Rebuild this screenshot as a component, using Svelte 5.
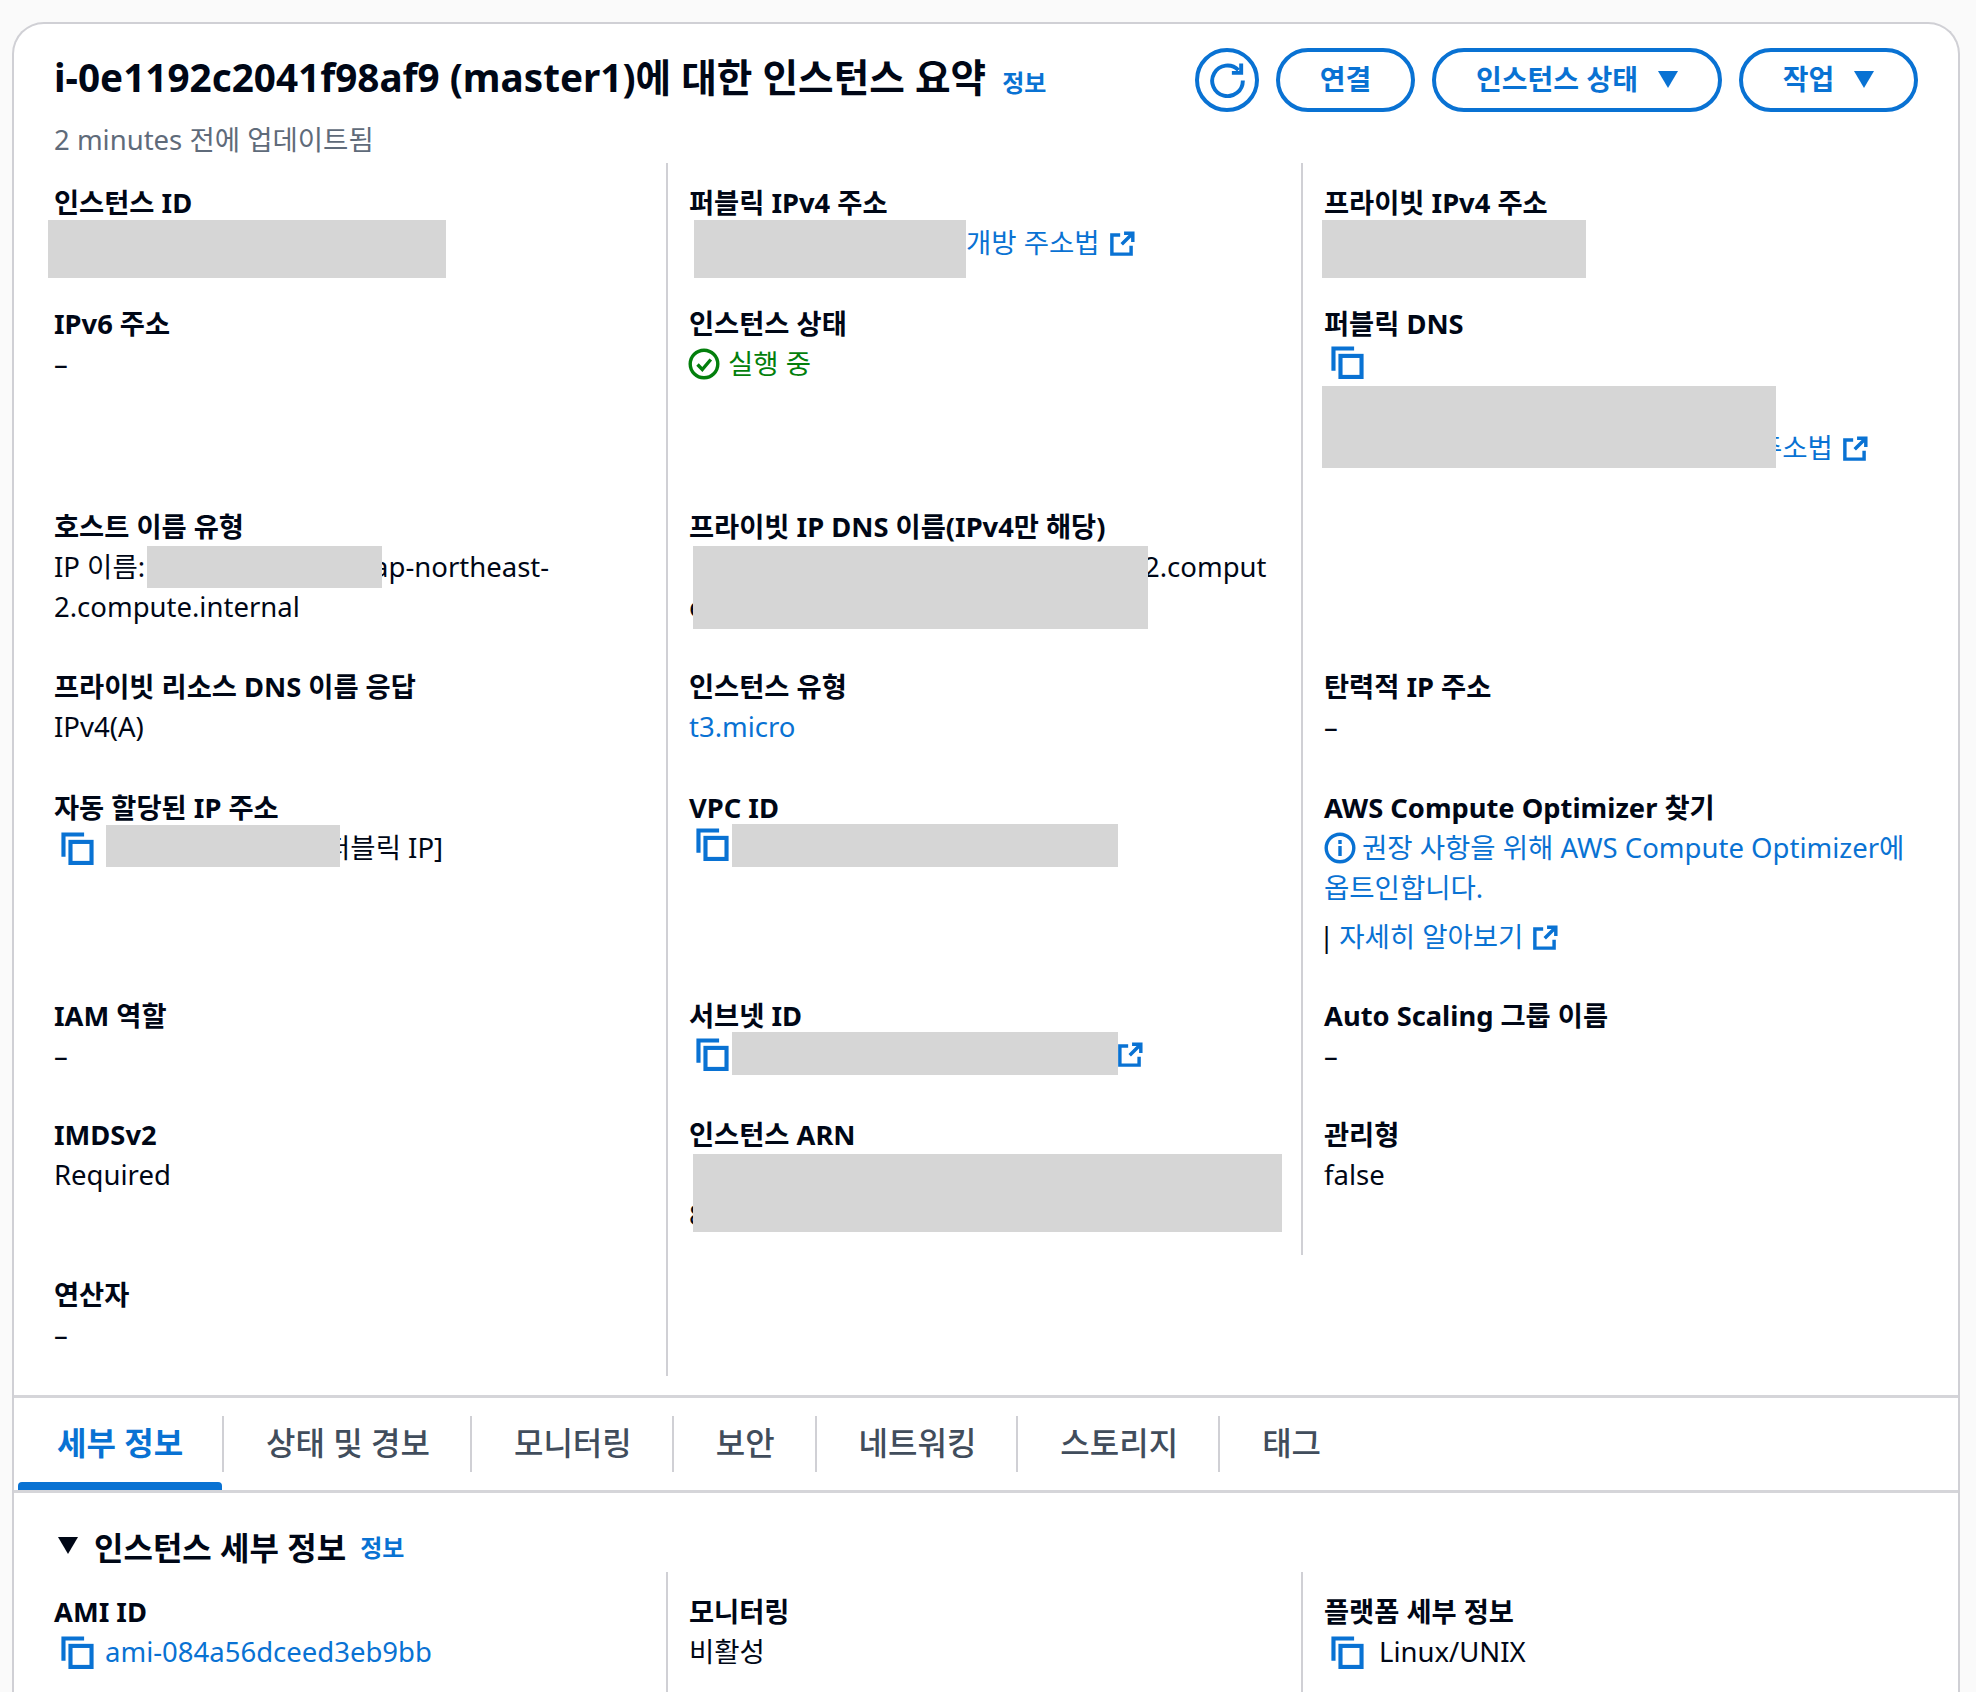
<script>
	const tabs = ['세부 정보', '상태 및 경보', '모니터링', '보안', '네트워킹', '스토리지', '태그'];
</script>

{#snippet copy()}
	<svg class="copy" viewBox="0 0 16 16" fill="none" stroke="currentColor" stroke-width="2">
		<path d="M1.2 12V1.2h10" />
		<rect x="4.6" y="4.8" width="10.2" height="10.2" />
	</svg>
{/snippet}

{#snippet ext()}
	<svg class="ext" viewBox="0 0 16 16" fill="none" stroke="currentColor" stroke-width="2.2">
		<path d="M6.5 2.5H1.2v12.3h12.3V9.5" />
		<path d="M7.5 8.5L14.6 1.4M9 1.4h5.6V7" />
	</svg>
{/snippet}

{#snippet caret()}
	<svg class="caret" viewBox="0 0 20 17"><path d="M0 0h20L10 17z" fill="currentColor" /></svg>
{/snippet}

<div class="page">
	<section class="card">
		<header class="head">
			<div class="titles">
				<h1>i-0e1192c2041f98af9 (master1)에 대한 인스턴스 요약 <a class="info">정보</a></h1>
				<p class="updated">2 minutes 전에 업데이트됨</p>
			</div>
			<div class="actions">
				<button class="btn icon-btn" aria-label="새로 고침">
					<svg viewBox="0 0 32 32" fill="none" stroke="currentColor" stroke-width="3.6">
						<path d="M26 6.5A14 14 0 1 0 30 16" />
						<path d="M28.5 0.5V9H20" />
					</svg>
				</button>
				<button class="btn connect">연결</button>
				<button class="btn state">인스턴스 상태 {@render caret()}</button>
				<button class="btn work">작업 {@render caret()}</button>
			</div>
		</header>

		<div class="grid summary">
			<div class="cell">
				<div class="label">인스턴스 ID</div>
				<div class="redact r-id"></div>
			</div>
			<div class="cell">
				<div class="label">퍼블릭 IPv4 주소</div>
				<div class="value link pad-open">개방 주소법 {@render ext()}</div>
				<div class="redact r-pub"></div>
			</div>
			<div class="cell">
				<div class="label">프라이빗 IPv4 주소</div>
				<div class="redact r-priv"></div>
			</div>

			<div class="cell">
				<div class="label">IPv6 주소</div>
				<div class="value">–</div>
			</div>
			<div class="cell">
				<div class="label">인스턴스 상태</div>
				<div class="value running">
					<svg class="status" viewBox="0 0 32 32" fill="none" stroke="currentColor" stroke-width="3.4">
						<circle cx="16" cy="16" r="13.8" />
						<path d="M9.5 16.5l4.8 5 8.5-10" />
					</svg>
					실행 중
				</div>
			</div>
			<div class="cell">
				<div class="label">퍼블릭 DNS</div>
				<div class="value link nudge">{@render copy()}</div>
				<div class="value link pad-dns">주소법 {@render ext()}</div>
				<div class="redact r-dns"></div>
			</div>

			<div class="cell">
				<div class="label">호스트 이름 유형</div>
				<div class="value block">IP 이름:<span class="pad-host"></span>ap-northeast-<br />2.compute.internal</div>
				<div class="redact r-host"></div>
			</div>
			<div class="cell">
				<div class="label">프라이빗 IP DNS 이름(IPv4만 해당)</div>
				<div class="value block"><span class="pad-ipdns"></span>2.comput<br />e</div>
				<div class="redact r-ipdns"></div>
			</div>
			<div class="cell"></div>

			<div class="cell">
				<div class="label">프라이빗 리소스 DNS 이름 응답</div>
				<div class="value">IPv4(A)</div>
			</div>
			<div class="cell">
				<div class="label">인스턴스 유형</div>
				<div class="value link">t3.micro</div>
			</div>
			<div class="cell">
				<div class="label">탄력적 IP 주소</div>
				<div class="value">–</div>
			</div>

			<div class="cell">
				<div class="label">자동 할당된 IP 주소</div>
				<div class="value"><span class="link">{@render copy()}</span><span class="pad-auto">[퍼블릭 IP]</span></div>
				<div class="redact r-auto"></div>
			</div>
			<div class="cell">
				<div class="label">VPC ID</div>
				<div class="value link">{@render copy()}</div>
				<div class="redact r-vpc"></div>
			</div>
			<div class="cell">
				<div class="label">AWS Compute Optimizer 찾기</div>
				<div class="value link">
					<svg class="status info-icon" viewBox="0 0 32 32" fill="none" stroke="currentColor" stroke-width="3.4">
						<circle cx="16" cy="16" r="13.8" />
						<path d="M16 14v10M16 8v4" />
					</svg>
					권장 사항을 위해 AWS Compute Optimizer에
				</div>
				<div class="value link">옵트인합니다.</div>
				<div class="value more"><span class="bar">|</span><span class="link more-link">자세히 알아보기 {@render ext()}</span></div>
			</div>

			<div class="cell">
				<div class="label">IAM 역할</div>
				<div class="value">–</div>
			</div>
			<div class="cell">
				<div class="label">서브넷 ID</div>
				<div class="value link nudge">{@render copy()}<span class="pad-subnet">{@render ext()}</span></div>
				<div class="redact r-subnet"></div>
			</div>
			<div class="cell">
				<div class="label">Auto Scaling 그룹 이름</div>
				<div class="value">–</div>
			</div>

			<div class="cell">
				<div class="label">IMDSv2</div>
				<div class="value">Required</div>
			</div>
			<div class="cell">
				<div class="label">인스턴스 ARN</div>
				<div class="value block"><br />8</div>
				<div class="redact r-arn"></div>
			</div>
			<div class="cell">
				<div class="label">관리형</div>
				<div class="value">false</div>
			</div>

			<div class="cell">
				<div class="label">연산자</div>
				<div class="value">–</div>
			</div>
		</div>

		<nav class="tabs">
			{#each tabs as tab, i}
				<div class="tab" class:active={i === 0}>{tab}</div>
			{/each}
		</nav>

		<h2 class="section">
			<svg class="section-caret" viewBox="0 0 20 17"><path d="M0 0h20L10 17z" fill="currentColor" /></svg>
			인스턴스 세부 정보 <a class="info">정보</a>
		</h2>

		<div class="grid details">
			<div class="cell">
				<div class="label">AMI ID</div>
				<div class="value link">{@render copy()}ami-084a56dceed3eb9bb</div>
			</div>
			<div class="cell">
				<div class="label">모니터링</div>
				<div class="value">비활성</div>
			</div>
			<div class="cell">
				<div class="label">플랫폼 세부 정보</div>
				<div class="value"><span class="link">{@render copy()}</span><span class="plat">Linux/UNIX</span></div>
			</div>
		</div>
	</section>
</div>

<style>
	:global(body) {
		background: #fafafa;
		font-family: 'Noto Sans', 'Noto Sans CJK KR', sans-serif;
		color: #000716;
	}

	.page {
		height: 1692px;
		overflow: hidden;
		padding: 22px 16px 0 12px;
		box-sizing: border-box;
	}

	.card {
		background: #fff;
		border: 2px solid #d0d0d5;
		border-bottom: none;
		border-radius: 32px 32px 0 0;
		height: 1700px;
		box-sizing: border-box;
	}

	.head {
		display: flex;
		justify-content: space-between;
		height: 139px;
		padding: 24px 40px 0 40px;
		box-sizing: border-box;
	}

	h1 {
		margin: 7px 0 0;
		height: 44px;
		font-size: 38.7px;
		line-height: 44px;
		font-weight: 700;
		white-space: nowrap;
	}

	.info {
		font-size: 24px;
		line-height: 1;
		font-weight: 700;
		color: #0972d3;
		margin-left: 6px;
	}

	.updated {
		margin: 21px 0 0;
		font-size: 27.5px;
		line-height: 40px;
		color: #5f6b7a;
	}

	.actions {
		display: flex;
		gap: 17px;
		align-items: flex-start;
	}

	.btn {
		height: 64px;
		border: 4px solid #0972d3;
		border-radius: 32px;
		background: #fff;
		color: #0972d3;
		font: inherit;
		font-size: 28px;
		line-height: 34px;
		font-weight: 700;
		display: flex;
		align-items: center;
		justify-content: center;
		gap: 20px;
		padding: 0 0 2px;
		box-sizing: border-box;
	}

	.icon-btn { width: 64px; padding: 0; }
	.icon-btn svg { width: 35px; height: 35px; }
	.connect { width: 139px; }
	.state { width: 290px; }
	.work { width: 179px; }
	.caret { width: 20px; height: 17px; }

	.grid {
		display: grid;
		grid-template-columns: repeat(3, 635px);
		margin-left: 19px;
	}

	.summary {
		grid-template-rows: 121px 203px 160px 121px 208px 119px 160px 121px;
	}

	.cell {
		position: relative;
		padding: 20px 0 0 21px;
		box-sizing: border-box;
		border-right: 2px solid #d0d0d5;
		min-width: 0;
	}

	.cell:nth-child(3n) {
		border-right: none;
	}

	.details .cell {
		height: 140px;
	}

	.label {
		font-size: 27.3px;
		line-height: 40px;
		font-weight: 700;
		white-space: nowrap;
	}

	.value {
		display: flex;
		align-items: center;
		font-size: 27.5px;
		line-height: 40px;
		white-space: nowrap;
	}

	.value.block {
		display: block;
	}

	.nudge {
		padding-top: 2px;
		margin-bottom: -2px;
	}

	.link {
		color: #0972d3;
	}

	.running {
		color: #037f0c;
	}

	.copy {
		width: 33px;
		height: 33px;
		margin: 0 11px 0 7px;
		display: block;
		flex: none;
	}

	.ext {
		width: 25px;
		height: 25px;
		margin-left: 10px;
		flex: none;
	}

	.status {
		width: 32px;
		height: 32px;
		margin: 0 8px 0 -1px;
		flex: none;
	}

	.info-icon {
		margin: 0 6px 0 0;
	}

	.redact {
		position: absolute;
		background: #d6d6d6;
	}

	.r-id { left: 15px; top: 57px; width: 398px; height: 58px; }
	.r-pub { left: 26px; top: 57px; width: 272px; height: 58px; }
	.r-priv { left: 19px; top: 57px; width: 264px; height: 58px; }
	.r-dns { left: 19px; top: 102px; width: 454px; height: 82px; }
	.r-host { left: 114px; top: 59px; width: 235px; height: 42px; }
	.r-ipdns { left: 25px; top: 59px; width: 455px; height: 83px; }
	.r-auto { left: 73px; top: 57px; width: 234px; height: 42px; }
	.r-vpc { left: 64px; top: 56px; width: 386px; height: 43px; }
	.r-subnet { left: 64px; top: 56px; width: 386px; height: 43px; }
	.r-arn { left: 25px; top: 59px; width: 589px; height: 78px; }

	.pad-open { padding-left: 277px; }
	.pad-dns { padding-left: 433px; margin-top: 51px; }
	.pad-host { display: inline-block; width: 228px; }
	.pad-ipdns { display: inline-block; width: 455px; }
	.pad-auto { padding-left: 211px; }
	.pad-subnet { padding-left: 368px; display: flex; align-items: center; }
	.plat { margin-left: 4px; }

	.more {
		margin-top: 9px;
	}

	.bar {
		margin: 0 5px 0 -5px;
	}

	.more-link {
		display: flex;
		align-items: center;
	}

	.tabs {
		display: flex;
		align-items: center;
		height: 92px;
		margin-top: 19px;
		border-top: 3px solid #d5d5d9;
		border-bottom: 3px solid #d5d5d9;
		padding-left: 4px;
	}

	.tab {
		position: relative;
		height: 56px;
		line-height: 54px;
		padding: 0 40px 0 42px;
		font-size: 32px;
		font-weight: 500;
		color: #414d5c;
		border-right: 2px solid #d0d0d5;
		white-space: nowrap;
	}

	.tab:last-child {
		border-right: none;
	}

	.tab.active {
		color: #0972d3;
		font-weight: 700;
		padding: 0 39px;
	}

	.tab.active::after {
		content: '';
		position: absolute;
		left: 0;
		right: 0;
		bottom: -18px;
		height: 8px;
		background: #0972d3;
		border-radius: 4px 4px 0 0;
	}

	.section {
		margin: 0;
		display: flex;
		align-items: center;
		height: 79px;
		padding: 26px 0 0 44px;
		box-sizing: border-box;
		font-size: 32px;
		font-weight: 700;
		white-space: nowrap;
	}

	.section .info {
		margin-left: 14px;
		padding-top: 4px;
	}

	.section-caret {
		width: 20px;
		height: 17px;
		margin-right: 16px;
	}
</style>
